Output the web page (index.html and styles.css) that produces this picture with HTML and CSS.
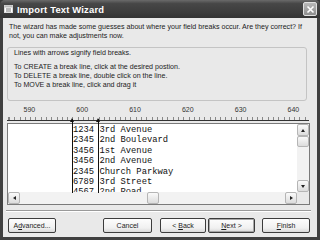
FILE: index.html
```html
<!DOCTYPE html>
<html lang="en">
<head>
<meta charset="UTF-8" />
<meta name="viewport" content="width=device-width, initial-scale=1" />
<title>Import Text Wizard</title>
<link rel="stylesheet" href="styles.css">
</head>
<body>
  <div class="window">
    <div class="titlebar">
      <svg class="app-icon" width="9" height="8" viewBox="0 0 9 8">
        <rect x="0.5" y="0.5" width="8" height="7" fill="#fff" stroke="#ddd" />
        <rect x="0.5" y="0.5" width="8" height="2" fill="#bbb" />
        <line x1="2" y1="4" x2="7" y2="4" stroke="#777" />
        <line x1="2" y1="6" x2="7" y2="6" stroke="#777" />
      </svg>
      <span class="title">Import Text Wizard</span>
      <span class="close">
        <svg width="9" height="9" viewBox="0 0 9 9">
          <path d="M1.5 1.5 L7.5 7.5 M7.5 1.5 L1.5 7.5" stroke="#fff" stroke-width="1.6" />
        </svg>
      </span>
    </div>

    <div class="dialog">
      <p class="intro">The wizard has made some guesses about where your field breaks occur. Are they correct? If not, you can make adjustments now.</p>

      <div class="group">
        <p class="hint">Lines with arrows signify field breaks.</p>
        <p class="hint-list">To CREATE a break line, click at the desired postion.<br>To DELETE a break line, double click on the line.<br>To MOVE a break line, click and drag it</p>
      </div>

      <div class="preview">
        <div class="ruler">
          <span class="mark">590</span><span class="mark">600</span><span class="mark">610</span><span class="mark">620</span><span class="mark">630</span><span class="mark">640</span>
        </div>
        <div class="grid">
          <div class="data">
            <div class="row">1234 3rd Avenue</div>
            <div class="row">2345 2nd Boulevard</div>
            <div class="row">3456 1st Avenue</div>
            <div class="row">3456 2nd Avenue</div>
            <div class="row">2345 Church Parkway</div>
            <div class="row">6789 3rd Street</div>
            <div class="row">4567 2nd Road</div>
          </div>
          <div class="vscroll">
            <span class="sbtn"><span class="arrow up"></span></span>
            <span class="thumb-v"></span>
            <span class="track"></span>
            <span class="sbtn"><span class="arrow down"></span></span>
          </div>
          <div class="hscroll">
            <span class="sbtn"><span class="arrow left"></span></span>
            <span class="track"></span>
            <span class="thumb-h"></span>
            <span class="track"></span>
            <span class="sbtn"><span class="arrow right"></span></span>
          </div>
          <div class="corner"></div>
        </div>
        <span class="break" style="left: 69px;"></span>
        <span class="break" style="left: 95px;"></span>
      </div>

      <div class="separator"></div>

      <div class="buttons">
        <button class="btn btn-adv">A<u>d</u>vanced...</button>
        <button class="btn btn-cancel">Cancel</button>
        <button class="btn btn-back">&lt; <u>B</u>ack</button>
        <button class="btn btn-next"><u>N</u>ext &gt;</button>
        <button class="btn btn-finish"><u>F</u>inish</button>
      </div>
    </div>
  </div>
</body>
</html>
```

FILE: styles.css
```css
/* Reset */
* {
  box-sizing: border-box;
}
body {
  margin: 0;
  width: 320px;
  height: 240px;
  overflow: hidden;
  background: #3a3a3a;
  font-family: 'Liberation Sans', Arial, sans-serif;
  font-size: 7.1px;
  color: #1c1c1c;
}
p {
  margin: 0;
}

/* Window frame */
.window {
  width: 320px;
  height: 240px;
  background: #404040;
  border-radius: 5px 5px 0 0;
  padding: 0 3px 3px;
  display: flex;
  flex-direction: column;
}
.titlebar {
  height: 18px;
  display: flex;
  align-items: center;
  background: linear-gradient(180deg, #6a6a6a 0%, #474747 20%, #3c3c3c 70%, #333 100%);
  margin: 0 -3px;
  padding: 0 3px 0 4px;
  border-radius: 5px 5px 0 0;
}
.app-icon {
  flex: none;
}
.title {
  margin-left: 4px;
  color: #fff;
  font-weight: 700;
  font-size: 9.4px;
  letter-spacing: 0.2px;
}
.close {
  margin-left: auto;
  width: 14px;
  height: 14px;
  border: 1px solid #e0e0e0;
  border-radius: 2px;
  background: linear-gradient(180deg, #b8b8b8, #8e8e8e);
  display: flex;
  align-items: center;
  justify-content: center;
}

/* Dialog body */
.dialog {
  flex: 1;
  background: #e9e9e9;
  display: flex;
  flex-direction: column;
}
.intro {
  margin: 5px 6px 0 6px;
  line-height: 9px;
}
.group {
  margin: 6px 10px 0 4px;
  border: 1px solid #c4c4c4;
  border-radius: 3px;
  padding: 1px 6px 10px;
  line-height: 9px;
}
.hint-list {
  margin-top: 5px;
}

/* Preview */
.preview {
  position: relative;
}
.ruler {
  height: 22px;
  position: relative;
  padding-top: 5px;
  color: #333;
  font-size: 7px;
  white-space: nowrap;
}
.ruler::after {
  content: "";
  position: absolute;
  left: 4px;
  right: 8px;
  bottom: 2px;
  height: 3px;
  border-bottom: 1px solid #333;
  background: repeating-linear-gradient(90deg, #888 0 1px, transparent 1px 5.28px);
  background-position: 2px 0;
}
.mark {
  display: inline-block;
  width: 52.8px;
  text-align: center;
}
.grid {
  margin: 0 7px 0 4px;
  height: 82px;
  border: 1px solid #7a7a7a;
  display: grid;
  grid-template-columns: 1fr 12px;
  grid-template-rows: 1fr 12px;
}
.data {
  background: #fff;
  overflow: hidden;
  padding: 1px 0 0 65px;
  font-family: 'Liberation Mono', 'Courier New', monospace;
  font-size: 8.8px;
  line-height: 10.4px;
  color: #111;
}
.row {
  white-space: pre;
}
.vscroll {
  display: flex;
  flex-direction: column;
  background: #f2f2f2;
}
.hscroll {
  display: flex;
  background: #f2f2f2;
}
.track {
  flex: 1;
}
.corner {
  background: #e9e9e9;
}
.sbtn, .thumb-v, .thumb-h {
  flex: none;
  width: 12px;
  height: 12px;
  background: linear-gradient(180deg, #fafafa, #dcdcdc);
  border: 1px solid #b5b5b5;
  border-radius: 2px;
  display: flex;
  align-items: center;
  justify-content: center;
}
.thumb-v {
  height: 11px;
}
.hscroll .track:first-of-type {
  flex: none;
  width: 108px;
}
.arrow {
  width: 0;
  height: 0;
  border: 2px solid transparent;
}
.arrow.up {
  border-bottom: 3px solid #222;
  border-top-width: 0;
}
.arrow.down {
  border-top: 3px solid #222;
  border-bottom-width: 0;
}
.arrow.left {
  border-right: 3px solid #222;
  border-left-width: 0;
}
.arrow.right {
  border-left: 3px solid #222;
  border-right-width: 0;
}
.break {
  position: absolute;
  top: 18px;
  height: 74px;
  width: 1px;
  background: #111;
}
.break::before {
  content: "";
  position: absolute;
  top: -1px;
  left: -2px;
  border: 2.5px solid transparent;
  border-top-width: 0;
  border-bottom: 4px solid #111;
}

/* Footer */
.separator {
  margin: 5px 6px 0 3px;
  border-top: 1px solid #9a9a9a;
  border-bottom: 1px solid #fff;
}
.buttons {
  display: flex;
  padding: 6px 7px 0 5px;
}
.btn {
  height: 15px;
  padding: 0;
  border: 1px solid #3c3c3c;
  border-radius: 2px;
  background: linear-gradient(180deg, #fdfdfd 0%, #f0f0f0 70%, #d8d8d8 100%);
  font-family: 'Liberation Sans', Arial, sans-serif;
  font-size: 7px;
  color: #1c1c1c;
}
.btn-adv {
  width: 48px;
}
.btn-cancel {
  width: 49px;
  margin-left: auto;
}
.btn-back {
  width: 46px;
  margin-left: 8px;
}
.btn-next {
  width: 47px;
  margin-left: 2px;
  box-shadow: inset 0 0 0 1px #a8a8a8;
}
.btn-finish {
  width: 48px;
  margin-left: 7px;
}
```
